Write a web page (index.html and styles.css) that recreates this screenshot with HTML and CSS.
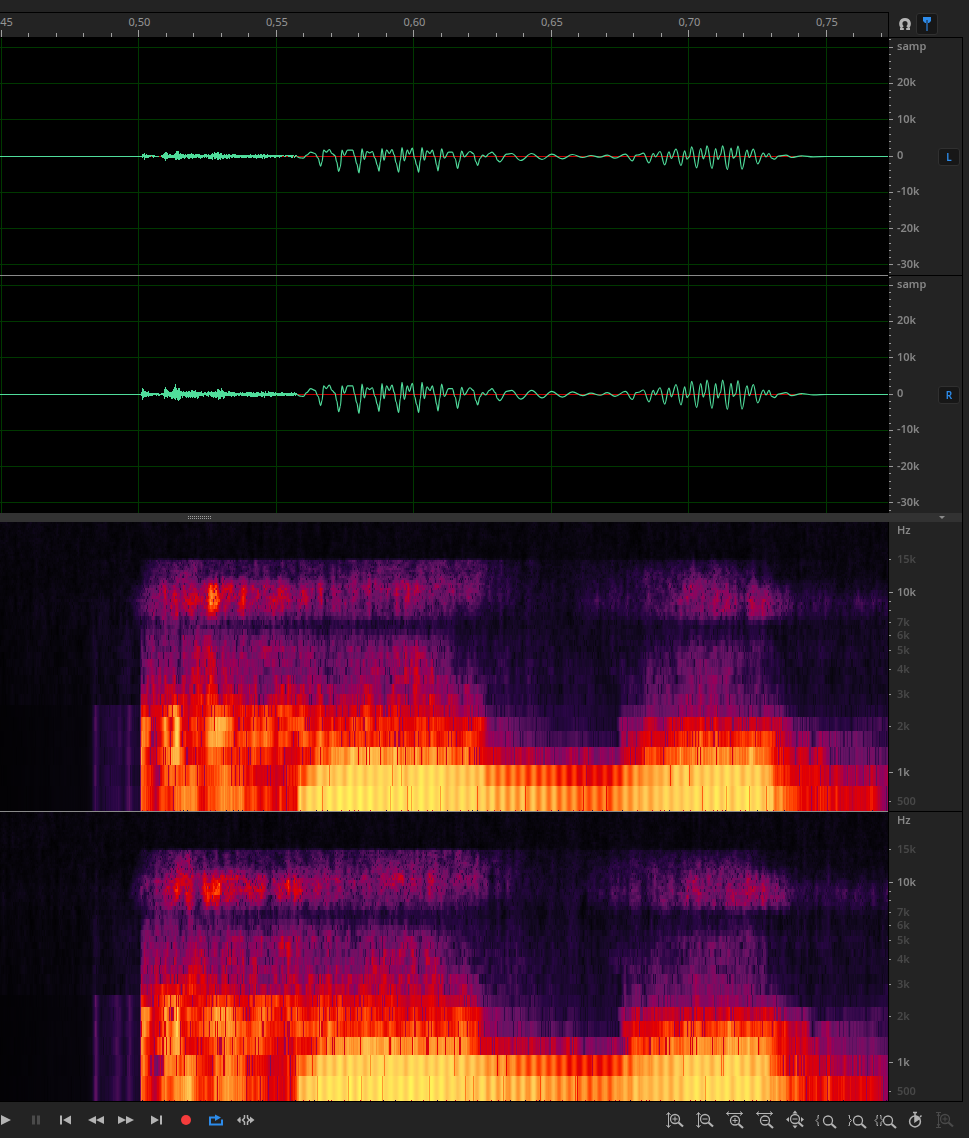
FILE: index.html
```html
<!DOCTYPE html>
<html lang="de">
<head>
    <meta charset="UTF-8">
    <meta name="viewport" content="width=device-width, initial-scale=1.0">
    <title>Waveform Editor</title>
    <link rel="stylesheet" href="styles.css">
</head>
<body>
    <svg class="sprite" aria-hidden="true">
        <symbol id="lens" viewBox="0 0 20 20">
            <circle cx="10" cy="9" r="4.5" fill="none" stroke="currentColor" stroke-width="1.3"/>
            <path d="M13.5 12.5l4.5 4" stroke="currentColor" stroke-width="2.2"/>
        </symbol>
    </svg>

    <main class="editor">
        <div class="row header">
            <div class="ruler">
                <ol class="times">
                    <li>0,45</li>
                    <li>0,50</li>
                    <li>0,55</li>
                    <li>0,60</li>
                    <li>0,65</li>
                    <li>0,70</li>
                    <li>0,75</li>
                </ol>
                <canvas id="ruler-ticks" class="ruler-ticks"></canvas>
            </div>
            <div class="tools">
                <button class="tool" aria-label="Snap">
                    <svg width="14" height="14" viewBox="0 0 14 14"><path d="M4.500 10.500C1.500 7.500 2.500 2.500 7 2.500s5.500 5 2.500 8" fill="none" stroke="#b4b4b4" stroke-width="3.200"/><path d="M2 12h3.800M8.200 12H12" stroke="#b4b4b4" stroke-width="2"/></svg>
                </button>
                <button class="tool active" aria-label="Playhead">
                    <svg width="12" height="16" viewBox="0 0 12 16"><path d="M2 1h8v4L8 7H4L2 5z" fill="#2d8ceb"/><path d="M6 4v11" stroke="#23568c" stroke-width="2"/></svg>
                </button>
            </div>
        </div>

        <div class="row wave-row lined">
            <canvas id="wave-l" class="plot"></canvas>
            <div class="axis">
                <canvas class="ticks amp-ticks"></canvas>
                <ol class="labels amp">
                    <li>samp</li>
                    <li>20k</li>
                    <li>10k</li>
                    <li>0</li>
                    <li>-10k</li>
                    <li>-20k</li>
                    <li>-30k</li>
                </ol>
                <button class="channel">L</button>
            </div>
        </div>

        <div class="row wave-row">
            <canvas id="wave-r" class="plot"></canvas>
            <div class="axis">
                <canvas class="ticks amp-ticks"></canvas>
                <ol class="labels amp">
                    <li>samp</li>
                    <li>20k</li>
                    <li>10k</li>
                    <li>0</li>
                    <li>-10k</li>
                    <li>-20k</li>
                    <li>-30k</li>
                </ol>
                <button class="channel">R</button>
            </div>
        </div>

        <div class="divider">
            <span class="grip"></span>
            <span class="collapse"></span>
        </div>

        <!-- flex-grow is the distance to the next frequency on the scale -->
        <div class="row spectrum-row lined">
            <canvas id="spectrum-l" class="plot"></canvas>
            <div class="axis">
                <canvas class="ticks hz-ticks"></canvas>
                <ol class="labels hz">
                    <li style="flex-grow: 17">Hz</li>
                    <li class="dim" style="flex-grow: 21">15k</li>
                    <li style="flex-grow: 18">10k</li>
                    <li class="dim" style="flex-grow: 1">7k</li>
                    <li class="dim" style="flex-grow: 3">6k</li>
                    <li class="dim" style="flex-grow: 7">5k</li>
                    <li class="dim" style="flex-grow: 13">4k</li>
                    <li class="dim" style="flex-grow: 20">3k</li>
                    <li class="dim" style="flex-grow: 34">2k</li>
                    <li style="flex-grow: 17">1k</li>
                    <li class="dim" style="flex-grow: 4">500</li>
                </ol>
            </div>
        </div>

        <div class="row spectrum-row last">
            <canvas id="spectrum-r" class="plot"></canvas>
            <div class="axis">
                <canvas class="ticks hz-ticks"></canvas>
                <ol class="labels hz">
                    <li style="flex-grow: 17">Hz</li>
                    <li class="dim" style="flex-grow: 21">15k</li>
                    <li style="flex-grow: 18">10k</li>
                    <li class="dim" style="flex-grow: 1">7k</li>
                    <li class="dim" style="flex-grow: 3">6k</li>
                    <li class="dim" style="flex-grow: 7">5k</li>
                    <li class="dim" style="flex-grow: 13">4k</li>
                    <li class="dim" style="flex-grow: 20">3k</li>
                    <li class="dim" style="flex-grow: 34">2k</li>
                    <li style="flex-grow: 17">1k</li>
                    <li class="dim" style="flex-grow: 4">500</li>
                </ol>
            </div>
        </div>
    </main>

    <footer class="toolbar">
        <div class="group transport">
            <button class="btn" aria-label="Play"><svg viewBox="0 0 20 20"><path d="M5 5v10l10-5z" fill="currentColor"/></svg></button>
            <button class="btn" aria-label="Pause" disabled><svg viewBox="0 0 20 20"><path d="M6 5.500h3v9H6zM11 5.500h3v9h-3z" fill="currentColor"/></svg></button>
            <button class="btn" aria-label="Previous"><svg viewBox="0 0 20 20"><path d="M4 5.500h2v9H4zM15 5.500v9L7 10z" fill="currentColor"/></svg></button>
            <button class="btn" aria-label="Rewind"><svg viewBox="0 0 20 20"><path d="M10 6v8l-8-4zM18 6v8l-8-4z" fill="currentColor"/></svg></button>
            <button class="btn" aria-label="Fast forward"><svg viewBox="0 0 20 20"><path d="M2 6v8l8-4zM10 6v8l8-4z" fill="currentColor"/></svg></button>
            <button class="btn" aria-label="Next"><svg viewBox="0 0 20 20"><path d="M14 5.500h2v9h-2zM5 5.500v9l8-4.500z" fill="currentColor"/></svg></button>
            <button class="btn record" aria-label="Record"><svg viewBox="0 0 20 20"><circle cx="10" cy="10" r="5" fill="currentColor"/></svg></button>
            <button class="btn loop" aria-label="Loop playback"><svg viewBox="0 0 20 20"><path d="M6 7.500H4v7h12v-5" fill="none" stroke="currentColor" stroke-width="2"/><path d="M6 6.500h3v-2l6 3-6 3.500v-2.500H6z" fill="currentColor"/></svg></button>
            <button class="btn" aria-label="Skip selection"><svg viewBox="0 0 20 20"><path d="M2 10h3M4.500 7.500L2 10l2.500 2.500M8.500 5v3L6.500 10l2 2v3M11.500 5v3l2 2-2 2v3" fill="none" stroke="currentColor" stroke-width="1.500"/><path d="M13 9h1V6.500l4.500 3.500-4.500 3.500V11h-1z" fill="currentColor"/></svg></button>
        </div>
        <div class="group zooms">
            <button class="btn" aria-label="Zoom in amplitude"><svg viewBox="0 0 20 20"><path d="M3.500 3v14M1.500 5l2-2.500 2 2.500M1.500 15l2 2.500 2-2.500M7.500 9h5M10 6.500v5" fill="none" stroke="currentColor"/><use href="#lens" width="20" height="20"/></svg></button>
            <button class="btn" aria-label="Zoom out amplitude"><svg viewBox="0 0 20 20"><path d="M3.500 3v14M1.500 5l2-2.500 2 2.500M1.500 15l2 2.500 2-2.500M7.500 9h5" fill="none" stroke="currentColor"/><use href="#lens" width="20" height="20"/></svg></button>
            <button class="btn" aria-label="Zoom in time"><svg viewBox="0 0 20 20"><path d="M1.500 3.500h16M4 1.500l-2.500 2L4 5.500M15 1.500l2.500 2-2.500 2M7.500 10.500h5M10 8v5" fill="none" stroke="currentColor"/><use href="#lens" y="1.500" width="20" height="20"/></svg></button>
            <button class="btn" aria-label="Zoom out time"><svg viewBox="0 0 20 20"><path d="M1.500 3.500h16M4 1.500l-2.500 2L4 5.500M15 1.500l2.500 2-2.500 2M7.500 10.500h5" fill="none" stroke="currentColor"/><use href="#lens" y="1.500" width="20" height="20"/></svg></button>
            <button class="btn" aria-label="Zoom out full"><svg viewBox="0 0 20 20"><path d="M7.500 9h5" stroke="currentColor"/><path d="M10 .5l2.500 3h-5zM10 18.500l2.500-3h-5zM1 9.500l3-2.500v5zM19 9.500l-3-2.500v5z" fill="currentColor"/><use href="#lens" width="20" height="20"/></svg></button>
            <button class="btn" aria-label="Zoom to in point"><svg viewBox="0 0 20 20"><path d="M4 5.500H3v3l-2 2 2 2v3h1" fill="none" stroke="currentColor"/><use href="#lens" x="3" y="1.500" width="20" height="20"/></svg></button>
            <button class="btn" aria-label="Zoom to out point"><svg viewBox="0 0 20 20"><path d="M3.500 5.500h1v3l2 2-2 2v3h-1" fill="none" stroke="currentColor"/><use href="#lens" x="3" y="1.500" width="20" height="20"/></svg></button>
            <button class="btn" aria-label="Zoom to selection"><svg viewBox="0 0 20 20"><path d="M3 5.500H2v3l-2 2 2 2v3h1M5 5.500h1v3l2 2-2 2v3H5" fill="none" stroke="currentColor"/><use href="#lens" x="3" y="1.500" width="20" height="20"/></svg></button>
            <button class="btn" aria-label="Zoom to time"><svg viewBox="0 0 20 20"><circle cx="10" cy="11.500" r="5.400" fill="none" stroke="currentColor" stroke-width="1.500"/><path d="M10 11.500V6a5.500 5.500 0 0 1 4.500 2.500zM8 2.500h4M10 2.500v3M15 7l1.500-1.500" fill="currentColor" stroke="currentColor" stroke-width="1.500"/></svg></button>
            <button class="btn" aria-label="Reset zoom" disabled><svg viewBox="0 0 20 20"><path d="M3.500 3v14M1 2.500h5M1 17.500h5M2 6l1.500-2L5 6M2 14l1.500 2L5 14M7.500 9h5M10 6.500v5" fill="none" stroke="currentColor"/><use href="#lens" width="20" height="20"/></svg></button>
        </div>
    </footer>

    <script src="script.js"></script>
</body>
</html>
```
FILE: styles.css
```css
* {
    margin: 0;
    padding: 0;
    box-sizing: border-box;
}

body {
    font-family: "Noto Sans", "Open Sans", sans-serif;
    font-size: 11px;
    background-color: #232323;
    color: #969696;
    min-height: 100vh;
    overflow-x: hidden;
}

ol {
    list-style: none;
}

button {
    font: inherit;
    color: inherit;
    background: none;
    border: none;
    cursor: pointer;
}

.sprite {
    display: none;
}

.editor {
    padding: 12px 6px 0 0;
}

.row {
    display: flex;
}

/* Time ruler */
.header {
    height: 26px;
}

.ruler {
    flex: 1;
    min-width: 0;
    display: flex;
    flex-direction: column;
    border: solid #000;
    border-width: 1px 0;
    overflow: hidden;
}

.times {
    display: flex;
    justify-content: space-between;
    margin: 0 48px 0 -11px;
    line-height: 17px;
}

.times li {
    width: 26px;
    text-align: center;
}

.ruler-ticks {
    display: block;
    width: 100%;
    height: 7px;
}

.tools {
    width: 75px;
    display: flex;
    align-items: center;
    padding: 0 0 2px 5px;
    border: solid #000;
    border-width: 0 0 1px 1px;
}

.tool {
    width: 22px;
    height: 22px;
    display: flex;
    align-items: center;
    justify-content: center;
}

.tool.active {
    background-color: #171717;
    border: 1px solid #303030;
    border-radius: 3px;
}

/* Lanes */
.plot {
    display: block;
    flex: 1;
    min-width: 0;
    height: 100%;
    background-color: #000;
}

.wave-row {
    height: 237px;
}

.wave-row.lined {
    height: 238px;
}

.spectrum-row {
    height: 290px;
}

.lined .plot {
    border-bottom: 1px solid #8a8a8a;
}

.lined .axis,
.last .axis,
.last .plot {
    border-bottom: 1px solid #000;
}

.axis {
    width: 75px;
    display: flex;
    align-items: stretch;
    border-left: 1px solid #000;
    border-right: 1px solid #000;
}

.ticks {
    width: 4px;
    height: 100%;
}

.labels {
    flex: 1;
    display: flex;
    flex-direction: column;
    padding-left: 4px;
    color: #868686;
    font-weight: 600;
    line-height: 12px;
}

.amp {
    justify-content: space-between;
    height: 235px;
    padding-top: 2px;
    padding-bottom: 3px;
}

.hz {
    padding-top: 2px;
}

.hz li {
    flex-basis: 12px;
}

.labels .dim {
    color: #484848;
}

.channel {
    width: 22px;
    height: 18px;
    margin: 110px 2px 0 0;
    background-color: #171717;
    border: 1px solid #303030;
    border-radius: 3px;
    color: #2d8ceb;
    font-size: 10px;
    font-weight: 600;
    line-height: 16px;
}

.divider {
    display: flex;
    justify-content: space-between;
    align-items: center;
    height: 9px;
    padding: 0 17px 0 187px;
    background-color: #323232;
    border-right: 1px solid #000;
}

.grip {
    width: 25px;
    height: 4px;
    background:
        repeating-linear-gradient(transparent 0 1px, #323232 1px 2px),
        repeating-linear-gradient(90deg, transparent 0 1px, #a0a0a0 1px 2px);
}

.collapse {
    border: 3px solid transparent;
    border-top-color: #8a8a8a;
    border-bottom: none;
}

/* Bottom toolbar */
.toolbar {
    display: flex;
    justify-content: space-between;
    height: 36px;
    padding-right: 9px;
    color: #b4b4b4;
}

.group {
    display: flex;
    align-items: center;
}

.transport {
    margin-left: -9px;
}

.btn {
    width: 30px;
    height: 30px;
    display: flex;
    align-items: center;
    justify-content: center;
}

.btn svg {
    width: 20px;
    height: 20px;
    overflow: visible;
}

.btn:disabled {
    color: #4a4a4a;
    cursor: default;
}

.btn.record {
    color: #f53c3c;
}

.btn.loop {
    color: #2d8ceb;
}
```
FILE: script.js
```js
const TIMELINE = 888; // x values in the tables below run from 0 to TIMELINE

let seed = 7;

function random() {
    seed = (seed * 1664525 + 1013904223) >>> 0;
    return seed / 4294967296;
}

function setup(canvas) {
    canvas.width = canvas.clientWidth;
    canvas.height = canvas.clientHeight;
    return canvas.getContext('2d');
}

function sample(list, x) {
    if (x <= list[0][0]) return list[0][1];
    for (let i = 1; i < list.length; i++) {
        if (x <= list[i][0]) {
            const [x0, v0] = list[i - 1];
            const [x1, v1] = list[i];
            return v0 + (v1 - v0) * (x - x0) / (x1 - x0);
        }
    }
    return list[list.length - 1][1];
}

function pairs(flat) {
    const out = [];
    for (let i = 0; i < flat.length; i += 2) out.push([flat[i], flat[i + 1]]);
    return out;
}

/* ---------- ruler and axes ---------- */

function drawRuler() {
    const canvas = document.getElementById('ruler-ticks');
    const ctx = setup(canvas);
    const step = (canvas.width - 63) / 30;
    ctx.fillStyle = '#a0a0a0';
    for (let i = 0; i * step < canvas.width; i++) {
        const h = i % 5 === 0 ? 7 : 4;
        ctx.fillRect(Math.floor(1 + i * step), 7 - h, 1, h);
    }
}

function ampLine(i) {
    return Math.floor(9.2 + i * 36.28);
}

function drawAmpTicks(canvas) {
    const ctx = setup(canvas);
    ctx.fillStyle = '#9a9a9a';
    for (let i = -1; i < 32; i++) {
        ctx.fillRect(0, ampLine(i / 5), i % 5 === 0 ? 4 : 2, 1);
    }
}

function drawHzTicks(canvas) {
    const ctx = setup(canvas);
    ctx.fillStyle = '#9a9a9a';
    [37, 79, 88, 100, 113, 128, 147, 172, 204, 279].forEach(y => ctx.fillRect(0, y, 2, 1));
    [70, 250].forEach(y => ctx.fillRect(0, y, 4, 1));
}

/* ---------- waveform ---------- */

// [time, level] in thirds of a pixel, the zero line is at 79
const first = pairs([
    530,79, 540,83, 550,84, 560,75, 572,66, 585,70, 594,84, 602,108, 606,95, 611,60, 619,66, 628,58, 636,70, 645,76,
    650,95, 656,124, 661,110, 666,60, 673,76, 683,60, 698,60, 704,78, 710,100, 717,128, 721,100, 726,56, 733,88,
    741,64, 749,68, 757,64, 765,84, 772,105, 777,123, 781,95, 786,55, 792,90, 800,60, 808,70, 816,58, 823,75,
    828,98, 836,126, 841,90, 846,52, 853,92, 862,60, 868,72, 877,54, 884,85, 890,105, 896,126, 901,90, 906,52,
    913,90, 921,62, 930,70, 937,60, 944,80, 950,105, 954,122, 959,90, 965,56, 973,84, 986,66, 997,66, 1005,85,
    1013,115, 1018,95, 1025,63, 1033,80, 1050,64, 1060,70, 1068,95, 1073,106, 1080,85, 1088,75, 1097,80,
    1108,70, 1116,66, 1126,75, 1132,90, 1139,95
]).map(p => [120 + p[0] / 3, (79 - p[1]) / 3]);

const second = pairs([
    20,72, 35,70, 62,91, 95,70, 126,88, 155,72, 187,86, 217,73,
    248,82, 273,76, 300,81, 322,75, 345,84, 376,72, 397,92, 408,75, 416,74,
    430,69, 447,98, 460,70, 466,80, 480,64, 494,104, 507,65, 514,85, 528,57,
    543,106, 554,62, 561,87, 568,80, 575,50, 590,113, 602,55, 610,86, 615,75, 621,47,
    636,115, 647,55, 654,88, 661,75, 668,47, 682,118, 693,54, 700,84, 707,78,
    714,48, 726,117, 741,60, 748,82, 760,57, 773,101, 790,69, 798,80, 807,70,
    815,84, 824,87, 835,78, 858,75, 875,82, 905,77, 940,80, 980,79, 1165,79
]).map(p => [500 + p[0] / 3, (79 - p[1]) / 3]);

const voice = first.concat(second);

const burstL = pairs([64,0, 68,10, 75,5, 95,2, 120,1, 135,10, 145,7, 158,3, 170,17, 178,8, 190,4, 205,9, 225,6,
    250,4, 270,6, 293,11, 310,5, 340,5, 380,3, 425,6, 450,3, 490,2, 530,2]);
const burstR = pairs([60,0, 66,15, 75,8, 100,2, 126,2, 135,16, 148,6, 165,24, 180,12, 200,9, 225,12, 250,5, 275,8,
    300,15, 320,7, 340,6, 370,4, 430,8, 470,4, 520,5, 530,2]);

function drawWave(id, burst, up, down) {
    const canvas = document.getElementById(id);
    const ctx = setup(canvas);
    const w = canvas.width;
    const scale = w / TIMELINE;
    const zero = 118;

    ctx.fillStyle = '#003800';
    for (let i = 0; i < 7; i++) {
        ctx.fillRect(0, ampLine(i), w, 1);
        ctx.fillRect(Math.floor(1 + i * (w - 63) / 6), 0, 1, canvas.height);
    }

    ctx.fillStyle = '#c80000';
    ctx.fillRect(142 * scale, zero, 660 * scale, 1);

    ctx.fillStyle = '#50dc9b';
    ctx.fillRect(0, zero, 142 * scale, 1);
    for (let x = 141; x < 297; x++) {
        const a = sample(burst, (x - 120) * 3) / 3;
        const top = Math.round(a * (0.5 + random() * 0.8));
        const bottom = Math.round(a * (0.4 + random() * 0.7));
        ctx.fillRect(x * scale, zero - top, Math.ceil(scale), top + bottom + (random() > 0.2 ? 1 : 0));
    }

    const level = v => zero + 0.5 - v * (v > 0 ? up : down);
    ctx.strokeStyle = '#50dc9b';
    ctx.lineWidth = 1.2;
    ctx.lineJoin = 'round';
    ctx.beginPath();
    ctx.moveTo(voice[0][0] * scale, level(voice[0][1]));
    for (let i = 1; i < voice.length; i++) {
        const x0 = voice[i - 1][0] * scale;
        const x1 = voice[i][0] * scale;
        const y0 = level(voice[i - 1][1]);
        const y1 = level(voice[i][1]);
        const bend = (x1 - x0) * 0.4;
        ctx.bezierCurveTo(x0 + bend, y0, x1 - bend, y1, x1, y1);
    }
    ctx.stroke();
}

/* ---------- spectrogram ---------- */

const palette = [
    [0, 0, 0, 0], [0.06, 8, 5, 14], [0.12, 20, 8, 36], [0.2, 40, 6, 68], [0.33, 104, 20, 102], [0.43, 150, 0, 92],
    [0.54, 205, 0, 26], [0.61, 228, 0, 0], [0.7, 255, 62, 0], [0.8, 255, 140, 38], [0.9, 255, 204, 88], [1, 255, 248, 88]
];

function colour(v) {
    v = Math.max(0, Math.min(1, v));
    let i = 1;
    while (v > palette[i][0]) i++;
    const a = palette[i - 1];
    const b = palette[i];
    const t = (v - a[0]) / (b[0] - a[0]);
    return [a[1] + (b[1] - a[1]) * t, a[2] + (b[2] - a[2]) * t, a[3] + (b[3] - a[3]) * t];
}

const quiet = [0,0.02, 86,0.05, 91,0.08, 95,0.27, 100,0.13, 118,0.22, 123,0.15, 129,0.27, 134,0.16, 139,0.16];
const hush = [0,0.04, 80,0.06, 91,0.07, 95,0.12, 100,0.08, 120,0.1, 128,0.14, 134,0.1, 139,0.11];

// level over time for single bands, y is the middle of each
const levels = [
    [0, [0,0.055, 888,0.06]],
    [36, [0,0.055, 888,0.06]],
    [39, [0,0.04, 138,0.07, 145,0.14, 185,0.3, 200,0.22, 300,0.2, 430,0.26, 480,0.22, 510,0.12, 560,0.08, 680,0.15, 740,0.15, 770,0.08, 888,0.07]],
    [53, [0,0.04, 135,0.07, 145,0.18, 165,0.25, 180,0.38, 192,0.36, 202,0.24, 300,0.24, 400,0.3, 480,0.28, 500,0.17, 540,0.09, 600,0.13, 680,0.25, 740,0.26, 760,0.14, 800,0.08, 888,0.07]],
    [67, [0,0.04, 130,0.08, 145,0.3, 165,0.38, 178,0.52, 190,0.5, 197,0.36, 213,0.56, 250,0.45, 300,0.4, 360,0.36, 405,0.44, 450,0.35, 480,0.33, 490,0.22, 540,0.12, 580,0.11, 600,0.17, 650,0.22, 690,0.34, 740,0.34, 780,0.28, 792,0.14, 888,0.11]],
    [79, [0,0.05, 125,0.1, 140,0.27, 165,0.4, 176,0.56, 190,0.54, 197,0.42, 206,0.5, 212,0.68, 219,0.64, 223,0.52, 260,0.48, 300,0.43, 350,0.34, 430,0.35, 490,0.25, 520,0.16, 570,0.12, 600,0.21, 650,0.25, 690,0.36, 740,0.4, 785,0.36, 795,0.19, 888,0.2]],
    [91, [0,0.05, 130,0.09, 142,0.27, 165,0.38, 176,0.5, 190,0.46, 198,0.32, 210,0.5, 218,0.44, 260,0.36, 330,0.3, 400,0.31, 450,0.25, 500,0.15, 570,0.11, 620,0.18, 680,0.3, 740,0.38, 780,0.36, 795,0.17, 888,0.17]],
    [103, [0,0.04, 136,0.1, 145,0.2, 180,0.31, 210,0.25, 300,0.17, 430,0.15, 490,0.12, 600,0.1, 680,0.15, 740,0.16, 780,0.11, 888,0.1]],
    [114, [...hush, 141,0.28, 180,0.34, 220,0.33, 320,0.28, 430,0.25, 450,0.17, 600,0.1, 680,0.18, 740,0.2, 780,0.11, 888,0.11]],
    [128, [...hush, 141,0.34, 165,0.35, 200,0.39, 250,0.39, 290,0.43, 310,0.35, 360,0.33, 410,0.4, 432,0.34, 455,0.22, 500,0.17, 600,0.11, 640,0.16, 690,0.27, 740,0.3, 775,0.16, 888,0.12]],
    [150, [...hush, 141,0.35, 165,0.4, 200,0.43, 250,0.41, 320,0.35, 390,0.42, 430,0.42, 450,0.29, 490,0.2, 600,0.12, 622,0.2, 690,0.29, 730,0.33, 770,0.19, 800,0.11, 888,0.13]],
    [167, [...hush, 141,0.45, 150,0.4, 178,0.53, 220,0.46, 300,0.43, 430,0.44, 470,0.35, 490,0.22, 560,0.14, 620,0.12, 624,0.22, 690,0.32, 740,0.33, 775,0.21, 800,0.12, 888,0.13]],
    [178, [...hush, 141,0.54, 150,0.45, 178,0.61, 220,0.53, 300,0.48, 430,0.48, 470,0.38, 490,0.23, 560,0.15, 620,0.13, 624,0.25, 690,0.35, 740,0.35, 775,0.23, 800,0.13, 888,0.14]],
    [189, [...quiet, 141,0.68, 150,0.5, 165,0.66, 175,0.8, 188,0.58, 220,0.72, 240,0.6, 265,0.68, 320,0.57, 360,0.58, 420,0.56, 470,0.48, 485,0.32, 510,0.24, 560,0.18, 618,0.13, 624,0.31, 680,0.4, 740,0.41, 780,0.32, 800,0.16, 888,0.16]],
    [202, [...quiet, 141,0.82, 148,0.78, 152,0.53, 160,0.55, 165,0.78, 171,0.6, 177,0.9, 182,0.6, 200,0.66, 220,0.84, 235,0.68, 245,0.58, 265,0.78, 280,0.6, 296,0.74, 305,0.6, 330,0.66, 400,0.62, 440,0.63, 480,0.6, 490,0.4, 520,0.28, 560,0.2, 615,0.15, 622,0.44, 680,0.54, 740,0.55, 775,0.48, 790,0.4, 808,0.32, 820,0.2, 888,0.24]],
    [217, [...quiet, 141,0.86, 148,0.78, 152,0.5, 160,0.52, 165,0.82, 171,0.66, 177,0.9, 182,0.62, 200,0.68, 220,0.84, 240,0.65, 265,0.78, 275,0.62, 300,0.72, 330,0.7, 380,0.66, 440,0.68, 475,0.68, 485,0.46, 520,0.33, 560,0.26, 600,0.21, 618,0.19, 622,0.5, 660,0.62, 700,0.68, 750,0.7, 770,0.68, 785,0.55, 808,0.45, 812,0.2, 822,0.42, 850,0.34, 888,0.2]],
    [234, [...quiet, 141,0.82, 148,0.64, 153,0.48, 165,0.78, 178,0.84, 185,0.6, 200,0.6, 215,0.75, 235,0.68, 255,0.7, 290,0.55, 310,0.66, 325,0.78, 360,0.84, 400,0.82, 440,0.8, 465,0.76, 480,0.62, 505,0.5, 560,0.46, 600,0.39, 620,0.42, 630,0.62, 650,0.7, 680,0.76, 750,0.82, 763,0.76, 775,0.62, 805,0.53, 830,0.4, 888,0.3]],
    [254, [...quiet, 141,0.77, 150,0.62, 155,0.5, 158,0.4, 165,0.72, 190,0.78, 205,0.63, 225,0.77, 250,0.62, 280,0.56, 295,0.66, 310,0.8, 322,0.89, 360,0.92, 430,0.92, 480,0.88, 490,0.79, 520,0.75, 560,0.7, 580,0.62, 605,0.62, 625,0.74, 645,0.83, 680,0.89, 730,0.92, 765,0.88, 772,0.72, 790,0.62, 815,0.57, 840,0.5, 888,0.4]],
    [277, [...quiet, 141,0.78, 148,0.62, 155,0.45, 162,0.72, 170,0.64, 178,0.78, 190,0.82, 203,0.67, 222,0.77, 240,0.73, 262,0.64, 285,0.6, 296,0.66, 299,0.88, 310,0.92, 340,0.95, 420,0.95, 450,0.92, 480,0.9, 500,0.86, 550,0.83, 580,0.76, 605,0.75, 625,0.84, 655,0.89, 700,0.93, 750,0.93, 765,0.89, 775,0.8, 795,0.74, 805,0.63, 815,0.64, 850,0.6, 875,0.55, 888,0.4]]
].map(([y, flat]) => [y, pairs(flat)]);

// band edges, wide at the low frequencies
const edges = [289, 264, 243, 225, 209, 195, 183, 172, 162, 153, 145, 137, 130, 124, 118, 113, 107, 103, 98, 94, 90,
    87, 83, 80, 77, 74, 71, 68, 66, 63, 61, 58, 56, 54, 52, 50, 48, 46, 44, 42, 40, 38];
for (let y = 36; y >= 0; y -= 2) edges.push(y);

function levelAt(x, y) {
    let i = 1;
    while (i < levels.length - 1 && y > levels[i][0]) i++;
    const a = levels[i - 1];
    const b = levels[i];
    const t = Math.max(0, Math.min(1, (y - a[0]) / (b[0] - a[0])));
    return sample(a[1], x) * (1 - t) + sample(b[1], x) * t;
}

// value noise along time
function streaks(width, size) {
    const knots = [];
    for (let i = 0; i <= width / size + 2; i++) knots.push(random() * 2 - 1);
    return x => {
        const k = Math.floor(x / size);
        const t = x / size - k;
        return knots[k] * (1 - t) + knots[k + 1] * t;
    };
}

function drawSpectrum(id, start, gain) {
    seed = start;
    const canvas = document.getElementById(id);
    const ctx = setup(canvas);
    const w = canvas.width;
    const image = ctx.createImageData(w, canvas.height);
    const shared = streaks(TIMELINE, 4);
    const broad = streaks(TIMELINE, 11);
    const carried = new Float32Array(w); // noise that runs on from band to band

    for (let b = 0; b < edges.length - 1; b++) {
        const bottom = edges[b];
        const top = edges[b + 1];
        const middle = (top + bottom) / 2;
        const low = top >= 183;
        const own = streaks(TIMELINE, low ? 5 : 3);
        const fine = streaks(TIMELINE, 1);
        const keep = top < 118 ? 0.75 : 0.45;

        for (let px = 0; px < w; px++) {
            const x = px * TIMELINE / w;
            let v = levelAt(x, middle);
            const voiced = x > 300 && top >= 243 && x < 770;
            carried[px] = carried[px] * keep + own(x) * (1 - keep * 0.4);
            if (voiced) {
                const depth = x > 485 && x < 640 ? 0.055 : 0.035;
                v += Math.sin(x * 2 * Math.PI / 10.2) * depth + own(x) * 0.025;
                if (random() < 0.015) v -= 0.15;
            } else if (low) {
                v += (shared(x) * 0.06 + own(x) * 0.05 + fine(x) * 0.03) * Math.min(1, v * 2.5);
                const dips = top >= 264 || x < 150 ? 0.03 : 0.1;
                if (random() < dips) v -= v * 0.28;
            } else {
                const amount = Math.min(1, 0.12 + v * 2);
                v += (carried[px] * 0.11 + broad(x) * 0.04 + shared(x) * 0.05 + fine(x) * 0.04) * amount;
                if (random() < 0.05) v *= 0.65;
            }
            if (x > 140 && v < 0.8) v *= gain;
            const c = colour(v);
            for (let y = top; y < bottom && y < canvas.height; y++) {
                const o = (y * w + px) * 4;
                image.data[o] = c[0];
                image.data[o + 1] = c[1];
                image.data[o + 2] = c[2];
                image.data[o + 3] = 255;
            }
        }
    }
    ctx.putImageData(image, 0, 0);

    // edge of the lowest bin
    for (let x = 142; x < w; x += 3 + Math.floor(random() * 14)) {
        ctx.fillStyle = random() < 0.2 ? '#2a0845' : '#c8001e';
        ctx.fillRect(x, 288, 1, 1);
    }
}

function draw() {
    seed = 7;
    drawRuler();
    document.querySelectorAll('.amp-ticks').forEach(drawAmpTicks);
    document.querySelectorAll('.hz-ticks').forEach(drawHzTicks);
    drawWave('wave-l', burstL, 1, 1);
    drawWave('wave-r', burstR, 1.35, 1.15);
    drawSpectrum('spectrum-l', 21, 1);
    drawSpectrum('spectrum-r', 84, 1.03);
}

window.addEventListener('resize', draw);
draw();
```
